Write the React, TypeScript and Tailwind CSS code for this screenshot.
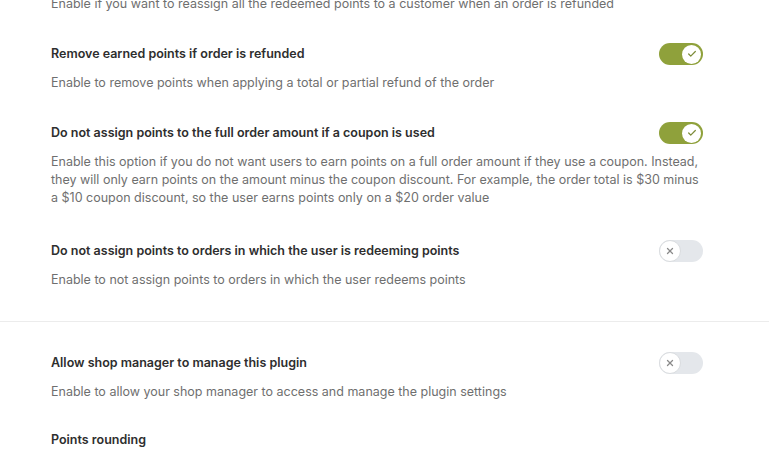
import { Check, X } from 'lucide-react';

interface Setting {
  title: string;
  desc: string[];
  on: boolean;
}

const groupOne: Setting[] = [
  {
    title: 'Remove earned points if order is refunded',
    desc: ['Enable to remove points when applying a total or partial refund of the order'],
    on: true,
  },
  {
    title: 'Do not assign points to the full order amount if a coupon is used',
    desc: [
      'Enable this option if you do not want users to earn points on a full order amount if they use a coupon. Instead,',
      'they will only earn points on the amount minus the coupon discount. For example, the order total is $30 minus',
      'a $10 coupon discount, so the user earns points only on a $20 order value',
    ],
    on: true,
  },
  {
    title: 'Do not assign points to orders in which the user is redeeming points',
    desc: ['Enable to not assign points to orders in which the user redeems points'],
    on: false,
  },
];

function Toggle({ on }: { on: boolean }) {
  if (on) {
    return (
      <div className="-my-[2px] flex h-[22px] w-[44px] shrink-0 items-center justify-end rounded-full bg-[#8fa13b] pr-[2px]">
        <div className="flex h-[19px] w-[19px] items-center justify-center rounded-full bg-white">
          <Check className="h-[10px] w-[10px] text-[#7d8c3a]" strokeWidth={3} />
        </div>
      </div>
    );
  }
  return (
    <div className="-my-[2px] flex h-[22px] w-[44px] shrink-0 items-center rounded-full bg-[#e4e7eb]">
      <div className="flex h-[22px] w-[22px] items-center justify-center rounded-full border border-[#d9dcdf] bg-white">
        <X className="h-[10px] w-[10px] text-[#8a8a8a]" strokeWidth={3} />
      </div>
    </div>
  );
}

function SettingRow({ setting }: { setting: Setting }) {
  const multi = setting.desc.length > 1;
  return (
    <div className={multi ? 'pt-4 pb-[19px]' : 'py-4'}>
      <div className="flex items-center justify-between">
        <div className="font-semibold leading-[18px] text-[#2e2e2e]">{setting.title}</div>
        <Toggle on={setting.on} />
      </div>
      <div className="mt-[11px] leading-[18px] text-[#6f6f6f]">
        {setting.desc.map((line) => (
          <div key={line} className="whitespace-nowrap">
            {line}
          </div>
        ))}
      </div>
    </div>
  );
}

export default function App() {
  return (
    <div
      className="h-[452px] w-[769px] overflow-hidden bg-white text-[12.5px]"
      style={{ fontFamily: 'Inter, "Liberation Sans", sans-serif' }}
    >
      <div className="-mt-[5px] pb-4 pr-[66px] pl-[51px]">
        <div className="pb-4 leading-[18px] text-[#6f6f6f]">
          Enable if you want to reassign all the redeemed points to a customer when an order is refunded
        </div>
        {groupOne.map((s) => (
          <SettingRow key={s.title} setting={s} />
        ))}
      </div>
      <div className="border-t border-[#ececec] py-4 pr-[66px] pl-[51px]">
        <SettingRow
          setting={{
            title: 'Allow shop manager to manage this plugin',
            desc: ['Enable to allow your shop manager to access and manage the plugin settings'],
            on: false,
          }}
        />
        <div className="pt-[14px] pb-4">
          <div className="font-semibold leading-[18px] text-[#2e2e2e]">Points rounding</div>
        </div>
      </div>
    </div>
  );
}
